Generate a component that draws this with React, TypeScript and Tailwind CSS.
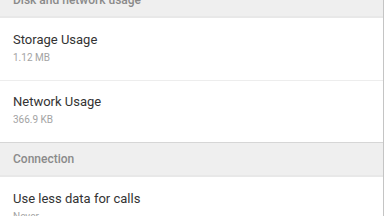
const sections = [
  {
    title: 'Disk and network usage',
    items: [
      { title: 'Storage Usage', summary: '1.12 MB' },
      { title: 'Network Usage', summary: '366.9 KB' },
    ],
  },
  {
    title: 'Connection',
    items: [{ title: 'Use less data for calls', summary: 'Never' }],
  },
];

export default function App() {
  return (
    <div
      className="w-[384px] h-[216px] overflow-hidden bg-[#efefef]"
      style={{ fontFamily: 'Roboto, "Noto Sans", sans-serif' }}
    >
      <div className="-mt-[16px] border-r border-[#c4c4c4]">
        {sections.map((section, i) => (
          <div key={section.title}>
            <div
              className={`flex items-center px-[13px] bg-[#efefef] text-[12px] font-medium text-[#8a8a8a] ${
                i > 0 ? 'h-[33px] border-t border-[#d6d6d6]' : 'h-[32px]'
              }`}
            >
              {section.title}
            </div>
            <div className="border-t-2 border-[#e8e8e8] bg-white">
              {section.items.map((item, j) => (
                <div
                  key={item.title}
                  className={`h-[62px] flex flex-col justify-center pb-[3px] px-[13px] ${
                    j > 0 ? 'border-t border-[#ededed]' : ''
                  }`}
                >
                  <div className="text-[13px] leading-[17px] text-[#333333]">{item.title}</div>
                  <div className="text-[10px] leading-[14px] mt-[3px] text-[#a3a3a3]">{item.summary}</div>
                </div>
              ))}
            </div>
          </div>
        ))}
      </div>
    </div>
  );
}
